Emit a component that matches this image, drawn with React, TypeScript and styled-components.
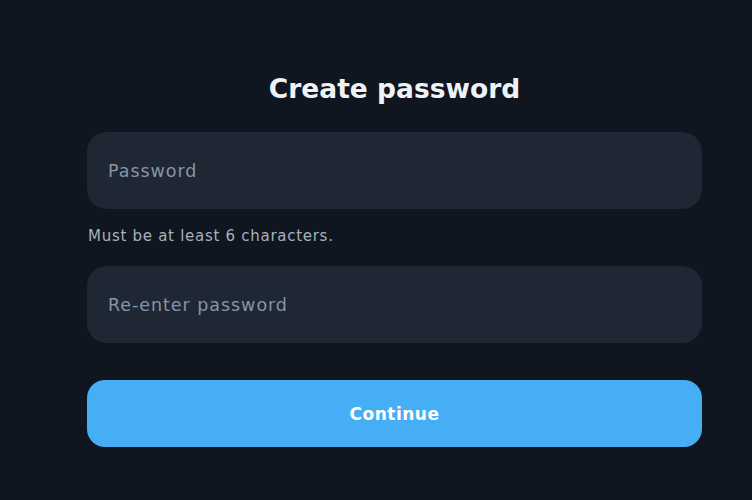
import React from "react";
import styled, { createGlobalStyle } from "styled-components";

const Global = createGlobalStyle`
  html, body { margin: 0; padding: 0; background: #0f1620; }
  body { font-family: "DejaVu Sans", "Open Sans", sans-serif; }
  * { box-sizing: border-box; }
`;

const Page = styled.div`
  min-height: 500px;
  background: #0f1620;
  padding: 69px 50px 0 87px;
`;

const Form = styled.form`
  width: 615px;
  display: flex;
  flex-direction: column;
`;

const Title = styled.h1`
  margin: 0 0 23px;
  text-align: center;
  font-size: 26.5px;
  line-height: 40px;
  font-weight: 700;
  color: #eef1f5;
`;

const Input = styled.input`
  height: 77px;
  border: none;
  outline: none;
  border-radius: 20px;
  background: #1e2733;
  padding: 0 21px;
  font-family: inherit;
  font-size: 17.5px;
  letter-spacing: 0.95px;
  color: #e6ebf1;
  &::placeholder { color: #8595a9; }
`;

const Hint = styled.p`
  margin: 17px 0 20px 1px;
  font-size: 15px;
  line-height: 20px;
  letter-spacing: 0.72px;
  color: #a6b1bf;
`;

const Button = styled.button`
  margin-top: 37px;
  height: 67px;
  border: none;
  border-radius: 18px;
  background: #46aef5;
  color: #ffffff;
  font-family: inherit;
  font-size: 17px;
  font-weight: 700;
  letter-spacing: 0.5px;
  cursor: pointer;
`;

export default function App() {
  return (
    <>
      <Global />
      <Page>
        <Form onSubmit={(e) => e.preventDefault()}>
          <Title>Create password</Title>
          <Input type="password" placeholder="Password" />
          <Hint>Must be at least 6 characters.</Hint>
          <Input type="password" placeholder="Re-enter password" />
          <Button type="submit">Continue</Button>
        </Form>
      </Page>
    </>
  );
}
